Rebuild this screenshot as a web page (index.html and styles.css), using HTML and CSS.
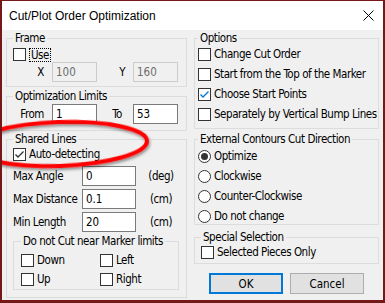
FILE: index.html
```html
<!DOCTYPE html>
<html lang="en">
<head>
  <meta charset="UTF-8">
  <meta name="viewport" content="width=device-width, initial-scale=1.0">
  <title>Cut/Plot Order Optimization</title>
  <link rel="stylesheet" href="styles.css">
</head>
<body>
  <div class="window">
    <div class="titlebar">
      <span class="title">Cut/Plot Order Optimization</span>
      <svg class="close" width="11" height="11" viewBox="0 0 11 11">
        <path d="M0.5 0.5 L10.5 10.5 M10.5 0.5 L0.5 10.5" stroke="#000" stroke-width="1" fill="none"/>
      </svg>
    </div>

    <div class="dialog">
      <div class="col col-left">
        <fieldset class="group frame">
          <legend>Frame</legend>
          <div class="check-row"><span class="box"></span><span class="focus">Use</span></div>
          <div class="pair-row">
            <label class="pair-label first">X</label><input class="edit" value="100" disabled>
            <label class="pair-label">Y</label><input class="edit" value="160" disabled>
          </div>
        </fieldset>

        <fieldset class="group limits">
          <legend>Optimization Limits</legend>
          <div class="pair-row">
            <label class="pair-label first">From</label><input class="edit" value="1">
            <label class="pair-label to">To</label><input class="edit" value="53">
          </div>
        </fieldset>

        <fieldset class="group shared">
          <legend>Shared Lines</legend>
          <div class="check-row">
            <span class="box"><svg viewBox="0 0 11 11"><path d="M1.5 5.5 L4 8 L9.5 2.5" class="tick dark"/></svg></span>
            <span>Auto-detecting</span>
          </div>
          <div class="field-row first-field">
            <label class="field-label">Max Angle</label><input class="edit wide" value="0"><span class="unit">(deg)</span>
          </div>
          <div class="field-row">
            <label class="field-label">Max Distance</label><input class="edit wide" value="0.1"><span class="unit">(cm)</span>
          </div>
          <div class="field-row">
            <label class="field-label">Min Length</label><input class="edit wide" value="20"><span class="unit">(cm)</span>
          </div>

          <fieldset class="group limits-inner">
            <legend>Do not Cut near Marker limits</legend>
            <div class="side-grid">
              <div class="check-row"><span class="box"></span><span>Down</span></div>
              <div class="check-row"><span class="box"></span><span>Left</span></div>
              <div class="check-row"><span class="box"></span><span>Up</span></div>
              <div class="check-row"><span class="box"></span><span>Right</span></div>
            </div>
          </fieldset>
        </fieldset>
      </div>

      <div class="col col-right">
        <fieldset class="group options">
          <legend>Options</legend>
          <div class="list">
            <div class="check-row"><span class="box"></span><span>Change Cut Order</span></div>
            <div class="check-row"><span class="box"></span><span>Start from the Top of the Marker</span></div>
            <div class="check-row">
              <span class="box"><svg viewBox="0 0 11 11"><path d="M1.5 5.5 L4 8 L9.5 2.5" class="tick blue"/></svg></span>
              <span>Choose Start Points</span>
            </div>
            <div class="check-row"><span class="box"></span><span>Separately by Vertical Bump Lines</span></div>
          </div>
        </fieldset>

        <fieldset class="group direction">
          <legend>External Contours Cut Direction</legend>
          <div class="list">
            <div class="check-row"><span class="radio checked"></span><span>Optimize</span></div>
            <div class="check-row"><span class="radio"></span><span>Clockwise</span></div>
            <div class="check-row"><span class="radio"></span><span>Counter-Clockwise</span></div>
            <div class="check-row"><span class="radio"></span><span>Do not change</span></div>
          </div>
        </fieldset>

        <fieldset class="group special">
          <legend>Special Selection</legend>
          <div class="check-row"><span class="box"></span><span>Selected Pieces Only</span></div>
        </fieldset>

        <div class="buttons">
          <button class="btn default">OK</button>
          <button class="btn">Cancel</button>
        </div>
      </div>
    </div>

    <!-- red callout drawn over the dialog -->
    <svg class="callout" width="385" height="303" viewBox="0 0 385 303">
      <defs>
        <filter id="shade" x="-20%" y="-40%" width="140%" height="180%">
          <feDropShadow dx="1" dy="2" stdDeviation="1.5" flood-color="#000" flood-opacity="0.45"/>
        </filter>
      </defs>
      <ellipse cx="59" cy="144" rx="88" ry="22" transform="rotate(-2 59 144)" fill="none" stroke="#f00" stroke-width="4" filter="url(#shade)"/>
    </svg>
  </div>
</body>
</html>
```

FILE: styles.css
```css
* {
  box-sizing: border-box;
}

body {
  margin: 0;
  font-family: "DejaVu Sans Condensed", "DejaVu Sans", sans-serif;
  font-size: 11.5px;
  letter-spacing: -0.45px;
  color: #000;
  background: #fff;
}

.window {
  position: relative;
  width: 385px;
  height: 303px;
  border-style: solid;
  border-color: #741818;
  border-width: 1px 2px 3px 2px;
  background: #f0f0f0;
  display: flex;
  flex-direction: column;
  overflow: hidden;
}

.titlebar {
  flex: none;
  height: 29px;
  background: #fff;
  display: flex;
  align-items: center;
  padding: 0 9px 0 7px;
}

.title {
  font-family: "Liberation Sans", Arial, sans-serif;
  font-size: 12px;
  letter-spacing: 0;
}

.close {
  margin-left: auto;
}

.dialog {
  flex: 1;
  display: flex;
  gap: 7px;
  padding: 2px 4px 0;
}

.col {
  display: flex;
  flex-direction: column;
}

.col-left {
  width: 181px;
}

.col-right {
  width: 185px;
}

/* group boxes */
.group {
  margin: 0;
  min-width: 0;
  border: 1px solid #dcdcdc;
  padding: 0 6px 5px;
}

.group legend {
  padding: 0 2px;
  height: 13px;
  line-height: 13px;
  white-space: nowrap;
}

.check-row {
  display: flex;
  align-items: center;
  gap: 3px;
  height: 13px;
  line-height: 13px;
  white-space: nowrap;
}

.box {
  flex: none;
  width: 13px;
  height: 13px;
  border: 1px solid #333;
  background: #fff;
}

.box svg {
  display: block;
  width: 11px;
  height: 11px;
}

.tick {
  fill: none;
  stroke-width: 1.4;
}

.tick.dark {
  stroke: #333;
}

.tick.blue {
  stroke: #0078d7;
}

.radio {
  flex: none;
  width: 13px;
  height: 13px;
  border: 1px solid #333;
  border-radius: 50%;
  background: #fff;
  padding: 2px;
}

.radio.checked::after {
  content: "";
  display: block;
  width: 7px;
  height: 7px;
  border-radius: 50%;
  background: #333;
}

.focus {
  border: 1px dotted #000;
  padding: 0 1px;
  line-height: 12px;
}

.edit {
  width: 45px;
  height: 20px;
  margin: 0;
  padding: 0 3px;
  border: 1px solid #7a7a7a;
  background: #fff;
  font: inherit;
  color: #000;
  outline: none;
}

.edit:disabled {
  border-color: #cccccc;
  background: #f0f0f0;
  color: #6d6d6d;
}

.edit.wide {
  width: 54px;
}

.pair-row,
.field-row {
  display: flex;
  align-items: center;
  height: 20px;
  white-space: nowrap;
}

.pair-label {
  width: 36px;
  text-align: right;
  padding-right: 8px;
}

.pair-label.first {
  width: 39px;
}

.pair-label.to {
  padding-right: 11px;
}

.field-label {
  width: 69px;
}

.unit {
  width: 44px;
  padding-left: 6px;
  text-align: center;
}

/* left column */
.frame {
  padding-bottom: 4px;
}

.frame .check-row {
  margin-top: 3px;
}

.frame .pair-row {
  margin-top: 1px;
}

.limits {
  margin-top: 3px;
  padding-bottom: 6px;
}

.limits .pair-row {
  margin-top: 1px;
}

.shared {
  margin-top: 2px;
  padding-bottom: 7px;
}

.shared > .check-row {
  margin-top: 2px;
}

.field-row {
  margin-top: 3px;
}

.field-row.first-field {
  margin-top: 5px;
}

.limits-inner {
  margin-top: 3px;
  width: 166px;
  padding: 0 7px 3px;
}

.side-grid {
  display: grid;
  grid-template-columns: 79px auto;
  row-gap: 6px;
  margin-top: 6px;
}

/* right column */
.list {
  display: flex;
  flex-direction: column;
  gap: 7px;
}

.options {
  padding: 0 3px 7px;
}

.options .list {
  margin-top: 3px;
}

.direction {
  margin-top: 4px;
  padding: 0 3px 1px;
}

.direction .list {
  margin-top: 4px;
}

.special {
  margin-top: 6px;
  padding: 0 6px 4px;
}

.special .check-row {
  margin-top: 2px;
}

.buttons {
  display: flex;
  gap: 7px;
  margin-top: 9px;
  padding-left: 15px;
}

.btn {
  width: 74px;
  height: 21px;
  padding: 0;
  border: 1px solid #adadad;
  background: #e1e1e1;
  font: inherit;
  color: #000;
}

.btn.default {
  border: 2px solid #0078d7;
}

.callout {
  position: absolute;
  left: -2px;
  top: -1px;
  pointer-events: none;
}
```
